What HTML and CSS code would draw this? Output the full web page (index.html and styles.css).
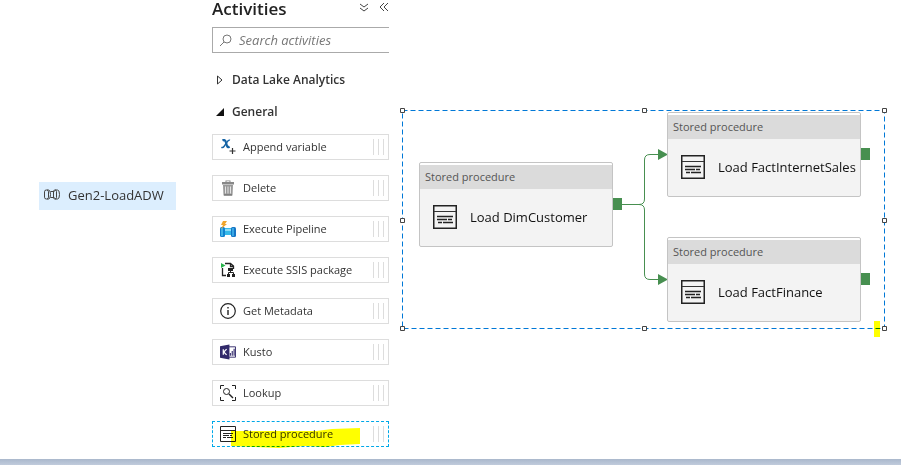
FILE: index.html
```html
<!DOCTYPE html>
<html lang="en">
<head>
<meta charset="utf-8">
<title>Pipeline editor</title>
<link rel="stylesheet" href="styles.css">
</head>
<body>
<svg class="defs" aria-hidden="true">
  <symbol id="proc-large" viewBox="0 0 24 24">
    <path d="M.75.75h22.5v22.5H.75z" fill="none" stroke="#222" stroke-width="1.5"/>
    <path d="M1 6.5h22" stroke="#333"/>
    <path d="M4 11.5h16M4 14.5h10M15 14.5h4M5 17.5h4M10 17.5h10" stroke="#222" stroke-width="1.3"/>
  </symbol>
  <symbol id="proc-small" viewBox="0 0 16 16">
    <path d="M.5.5h15v15H.5zM1 4.500h14" fill="none" stroke="#222"/>
    <path d="M3 7.500h10M3 9.500h6M10 9.500h2M3 11.500h3M7 11.500h6" stroke="#222"/>
  </symbol>
</svg>
<div class="workspace">
  <nav class="resources" aria-label="Pipelines">
    <a class="resource" href="#pipeline">
      <svg width="16" height="12" viewBox="0 0 16 12" fill="none" stroke="#444">
        <rect x=".5" y="1" width="4" height="9" rx="1.800"/><path d="M3 1h1.500q2 0 2 4.500T4.500 10H3M6.500 2.500h4M6.500 8.500h4"/><rect x="9.500" y="1" width="3" height="9" rx="1.500"/><path d="M11 1h2.500q2 0 2 4.500T13.500 10H11"/>
      </svg>
      <span>Gen2-LoadADW</span>
    </a>
  </nav>
  <aside class="activities">
    <header class="panel-head">
      <h1>Activities</h1>
      <button type="button" aria-label="Expand all"><svg width="10" height="10" viewBox="0 0 10 10"><path d="M1 1l4 3 4-3M1 5l4 3 4-3"/></svg></button>
      <button type="button" aria-label="Collapse panel"><svg width="10" height="10" viewBox="0 0 10 10"><path d="M5 0L1 4l4 4M9 0L5 4l4 4"/></svg></button>
    </header>
    <label class="search">
      <svg width="13" height="13" viewBox="0 0 13 13" fill="none" stroke="#777"><circle cx="8" cy="5" r="4"/><path d="M5 8L1 12"/></svg>
      <input type="search" placeholder="Search activities" aria-label="Search activities">
    </label>
    <button class="group" type="button" aria-expanded="false">
      <svg width="8" height="10" viewBox="0 0 8 10"><path d="M1.500 1v8L6 5z" fill="#fff" stroke="#333"/></svg>Data Lake Analytics
    </button>
    <button class="group" type="button" aria-expanded="true">
      <svg width="8" height="10" viewBox="0 0 8 10"><path d="M8 1v8H0z" fill="#111"/></svg>General
    </button>
    <ul class="list">
      <li class="item">
        <svg width="16" height="16" viewBox="0 0 16 16" fill="none"><path d="M2.500 1.500q2.500-1.500 3.500 2l1 3.500q.5 2 2.500.500" stroke="#1463a5" stroke-width="2.200"/><path d="M10 1.200q-1.500-.6-3 2L4 7.500Q3 9 1.300 8.300" stroke="#1463a5" stroke-width="1.400"/><path d="M12.500 9v6M9.500 12h6" stroke="#333" stroke-width="1.200"/></svg>
        <span>Append variable</span><i class="grip"></i></li>
      <li class="item">
        <svg width="16" height="16" viewBox="0 0 16 16"><path d="M5.500.5h5v1.500H14v2.500H2V2h3.500z" fill="#888"/><path d="M3 5h10l-.5 10.500h-9z" fill="#999"/><path d="M6.500 1.500h3M5.500 6.500v7M8 6.500v7M10.500 6.500v7" stroke="#e4e4e4"/><path d="M4 15h8" stroke="#666"/></svg>
        <span>Delete</span><i class="grip"></i></li>
      <li class="item">
        <svg width="16" height="16" viewBox="0 0 16 16"><path d="M4 7h9v7H4z" fill="#35b9e9"/><path d="M4 8h9v2H4z" fill="#8bdcf7"/><rect y="6" width="5" height="10" rx="1.500" fill="#1283cf"/><rect x="1" y="7" width="2" height="8" fill="#3fb2e8"/><rect x="11" y="6" width="5" height="10" rx="1.500" fill="#1676c5"/><rect x="12" y="7" width="2" height="8" fill="#39a8e5"/><path d="M3 0h4L5 3h2L1 8l2-4H1z" fill="#f0a52c"/></svg>
        <span>Execute Pipeline</span><i class="grip"></i></li>
      <li class="item">
        <svg width="16" height="16" viewBox="0 0 16 16" fill="none" stroke="#222"><path d="M2.500 6v7.500H6M5 1.500h5.500L13.500 4v3M10.500 1.500V4.500h3" stroke-width="1.300"/><path d="M1 1l4.500 2.500L1 6z" fill="#27b34b" stroke="none"/><path d="M8 6h5v3H8zM7 12h3v3H7zM12 12h3v3h-3z" fill="#222" stroke="none"/><path d="M10.500 9v1.500M8.500 12v-1.500h5V12"/></svg>
        <span>Execute SSIS package</span><i class="grip"></i></li>
      <li class="item">
        <svg width="16" height="16" viewBox="0 0 16 16" fill="none" stroke="#222"><circle cx="8" cy="8" r="7.300" stroke-width="1.200"/><path d="M8 7v5M8 4v1.500" stroke-width="1.400"/></svg>
        <span>Get Metadata</span><i class="grip"></i></li>
      <li class="item">
        <svg width="16" height="16" viewBox="0 0 17 16"><path d="M8 2.500h8.500v11H8z" fill="#fff" stroke="#322a6b"/><path d="M0 2l10-2v16L0 14z" fill="#322a6b"/><path d="M3.500 5v6M7 5L4 8l3 3" stroke="#fff" stroke-width="1.300" fill="none"/><path d="M11 9v3M13 7v5M15 4.500V12" stroke="#322a6b" stroke-width="1.200"/></svg>
        <span>Kusto</span><i class="grip"></i></li>
      <li class="item">
        <svg width="16" height="16" viewBox="0 0 16 16" fill="none" stroke="#222"><path d="M.5 4V.5H4M12 .5h3.500V4M15.500 12v3.500H12M4 15.500H.5V12"/><circle cx="6.500" cy="6.500" r="3"/><path d="M9 9l4 4" stroke-width="1.500"/></svg>
        <span>Lookup</span><i class="grip"></i></li>
      <li class="item selected">
        <svg width="16" height="16"><use href="#proc-small"/></svg>
        <span>Stored procedure</span><i class="grip"></i>
        <svg class="marker" width="129" height="21" viewBox="0 0 129 21"><path d="M0 3h47l38 0 16-2 28-1v16l-20 1-15 2-20-1-26 2-26-1-22-1z" fill="#ff0"/></svg></li>
    </ul>
  </aside>
  <main class="canvas">
    <svg class="wires" width="512" height="350" viewBox="0 0 512 350" fill="none" stroke="#478f50">
      <rect x="13.500" y="110.500" width="482" height="218" stroke="#0078d7" stroke-dasharray="5 3"/>
      <path d="M232 204.500h18q5.500 0 5.500-5.500v-39q0-5.500 5.500-5.500h9M250 204.500q5.500 0 5.500 5.500v64q0 5.500 5.500 5.500h9"/>
      <path d="M269 149l10 5.500-10 5.500zM269 274l10 5.500-10 5.500z" fill="#478f50" stroke="none"/>
      <g fill="#fff" stroke="#444"><path d="M11.500 108.500h4v4h-4zM253.500 108.500h4v4h-4zM493.500 108.500h4v4h-4zM11.500 218.500h4v4h-4zM493.500 218.500h4v4h-4zM11.500 326.500h4v4h-4zM253.500 326.500h4v4h-4zM493.500 326.500h4v4h-4z"/></g>
    </svg>
    <section class="node customer"><h2>Stored procedure</h2><div class="node-body"><svg width="24" height="24"><use href="#proc-large"/></svg><span>Load DimCustomer</span></div></section>
    <section class="node sales"><h2>Stored procedure</h2><div class="node-body"><svg width="24" height="24"><use href="#proc-large"/></svg><span>Load FactInternetSales</span></div></section>
    <section class="node finance"><h2>Stored procedure</h2><div class="node-body"><svg width="24" height="24"><use href="#proc-large"/></svg><span>Load FactFinance</span></div></section>
    <i class="corner-mark"></i>
  </main>
</div>
<footer class="strip"></footer>
</body>
</html>
```
FILE: styles.css
```css
* { box-sizing: border-box; }
body {
  margin: 0;
  min-height: 100vh;
  display: flex;
  flex-direction: column;
  background: #fff;
  color: #333;
  font: 12px/16px "Open Sans", "Noto Sans", sans-serif;
}
.defs { position: absolute; width: 0; height: 0; }
svg { flex: none; display: block; }
button { border: 0; padding: 0; background: none; color: inherit; font: inherit; }
.workspace { flex: 1; display: grid; grid-template-columns: 212px 177px 1fr; }
.resources { padding: 182px 36px 0 39px; }
.resource {
  display: flex;
  align-items: center;
  gap: 8px;
  height: 28px;
  padding: 0 0 2px 5px;
  background: #dceefe;
  color: #333;
  font-size: 13px;
  text-decoration: none;
  white-space: nowrap;
}
.activities { padding-bottom: 12px; }
.panel-head { display: flex; align-items: center; gap: 10px; height: 18px; margin-bottom: 9px; }
.panel-head h1 { margin: 0; flex: 1; font-size: 17px; line-height: 18px; font-weight: 600; color: #222; }
.panel-head button { padding-bottom: 2px; }
.panel-head svg { fill: none; stroke: #444; }
.search {
  display: flex;
  align-items: center;
  gap: 7px;
  height: 26px;
  margin-bottom: 11px;
  padding-left: 6px;
  border: 1px solid #aaa;
  border-right: 0;
}
.search input {
  flex: 1;
  min-width: 0;
  border: 0;
  padding: 0;
  outline: 0;
  background: none;
  font: italic 13px/16px "Open Sans", "Noto Sans", sans-serif;
}
.search input::placeholder { color: #777; opacity: 1; }
.group { display: flex; align-items: center; gap: 8px; height: 32px; padding-left: 4px; font-weight: 600; white-space: nowrap; }
.list { list-style: none; margin: 6px 0 0; padding: 0; display: grid; gap: 15px; }
.item {
  position: relative;
  display: flex;
  align-items: center;
  gap: 7px;
  height: 26px;
  padding: 0 4px 0 7px;
  border: 1px solid #ddd;
  font-size: 11px;
  line-height: 18px;
  white-space: nowrap;
}
.item span { flex: 1; }
.item.selected { border: 1px dashed #00a8e8; }
.grip {
  width: 11px;
  height: 16px;
  border: solid #ddd;
  border-width: 0 1px;
  background: linear-gradient(#ddd, #ddd) center / 1px 100% no-repeat;
}
.marker { position: absolute; left: 18px; top: 6px; mix-blend-mode: multiply; }
.canvas { position: relative; overflow: hidden; }
.wires { position: absolute; left: 0; top: 0; }
.node {
  position: absolute;
  width: 194px;
  height: 85px;
  padding-top: 2px;
  border: 1px solid #c4c4c4;
  border-radius: 2px;
  background: linear-gradient(#fff 2px, #f3f3f3 2px);
}
.node::after {
  content: "";
  position: absolute;
  left: 193px;
  top: 35px;
  width: 9px;
  height: 12px;
  background: #478f50;
}
.node h2 { margin: 0; padding: 0 5px; background: #dbdbdb; color: #555; font-size: 11px; line-height: 24px; font-weight: 400; }
.node-body { display: flex; align-items: center; gap: 13px; height: 56px; padding-left: 13px; color: #111; font-size: 13px; white-space: nowrap; }
.customer { left: 30px; top: 162px; }
.sales { left: 278px; top: 112px; }
.finance { left: 278px; top: 237px; }
.corner-mark { position: absolute; left: 485px; top: 321px; width: 6px; height: 16px; background: #ff0; mix-blend-mode: multiply; }
.strip { height: 6px; background: linear-gradient(#aab8cc, #c0cbdc); }
```
